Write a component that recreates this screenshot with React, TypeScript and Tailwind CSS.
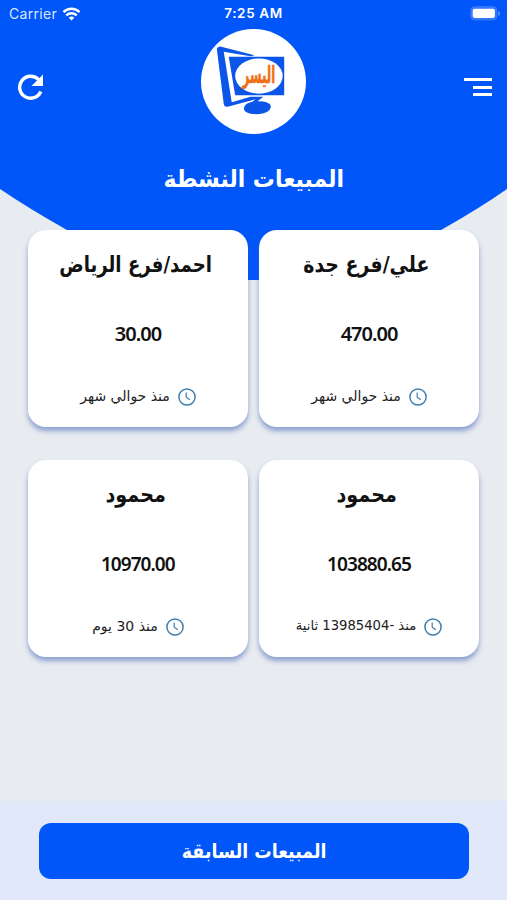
interface Sale {
  id: number;
  name: string;
  total: string;
  time: string;
  nameClass: string;
  totalClass: string;
  timeClass: string;
}

const sales: Sale[] = [
  {
    id: 1,
    name: 'علي/فرع جدة',
    total: '470.00',
    time: 'منذ حوالي شهر',
    nameClass: 'scale-x-[0.86] ml-[-6px]',
    totalClass: '',
    timeClass: 'text-[14px]',
  },
  {
    id: 2,
    name: 'احمد/فرع الرياض',
    total: '30.00',
    time: 'منذ حوالي شهر',
    nameClass: 'scale-x-[0.825] ml-[-4px]',
    totalClass: '',
    timeClass: 'text-[14px]',
  },
  {
    id: 3,
    name: 'محمود',
    total: '103880.65',
    time: 'منذ -13985404 ثانية',
    nameClass: 'scale-x-[0.87] ml-[-5px]',
    totalClass: 'scale-x-[0.955]',
    timeClass: 'text-[13.2px]',
  },
  {
    id: 4,
    name: 'محمود',
    total: '10970.00',
    time: 'منذ 30 يوم',
    nameClass: 'scale-x-[0.87] ml-[-5px]',
    totalClass: 'scale-x-[0.95]',
    timeClass: 'text-[14px]',
  },
];

const WifiIcon = () => (
  <svg width="19" height="14" viewBox="0 0 18 14" fill="none" stroke="#fff" strokeWidth="2.5">
    <path d="M1 5.2C5.6 .7 12.4.7 17 5.2" />
    <path d="M3.8 8.3c3-2.8 7.4-2.8 10.4 0" />
    <path d="M6.2 10.8C8 9.2 10 9.2 11.8 10.8L9 13.6z" fill="#fff" stroke="none" />
  </svg>
);

const BatteryIcon = () => (
  <svg width="31" height="15" viewBox="0 0 31 15">
    <rect x=".8" y=".8" width="26" height="13" rx="3.6" fill="#2f74fc" stroke="#3f80fd" />
    <rect x="2.7" y="2.7" width="22.2" height="9.2" rx="1.8" fill="#fff" />
    <path d="M28.4 5v5c2-.8 2-4.2 0-5z" fill="#6f9ffd" />
  </svg>
);

const RefreshIcon = () => (
  <svg width="28" height="28" viewBox="0 0 28 28">
    <path d="M23.8 18.5A11 11 0 1 1 21.7 6.7" fill="none" stroke="#fff" strokeWidth="3.4" />
    <path d="M26 1.5V13H14.5z" fill="#fff" />
  </svg>
);

const Logo = () => (
  <div className="mt-px size-[105px] rounded-full bg-white">
    <svg width="105" height="105" viewBox="0 0 106 106">
      <path
        d="M16 20.5Q16.5 17.5 20.5 17.8L54 26.5L50 27.5L23 23L31 74L50 68.5L63 68.3L57 73Q71 73 70.5 79Q69 85.5 57 86Q43 86 43.3 80Q44 75 52 73.500L55 71L27 78.500Q23.500 79 23 76z"
        fill="#0b55e8"
      />
      <path d="M28 28H84V67H34.500z" fill="#0b55e8" />
      <ellipse cx="58.500" cy="47.500" rx="24" ry="17.800" fill="#fff" />
      <text
        transform="translate(58.5 54.500) scale(1 1.35)"
        textAnchor="middle"
        textLength="33"
        lengthAdjust="spacingAndGlyphs"
        fontFamily="DejaVu Sans, sans-serif"
        fontWeight="bold"
        fontSize="18"
        fill="#f06f14"
        stroke="#f06f14"
        strokeWidth=".4"
      >
        اليسر
      </text>
    </svg>
  </div>
);

const ClockIcon = () => (
  <svg width="18" height="18" viewBox="0 0 18 18" fill="none" stroke="#3f7fae" strokeWidth="1.5">
    <circle cx="9" cy="9" r="8.1" />
    <path d="M8.2 4.5V9.3L11.8 11.8" strokeWidth="1.2" />
  </svg>
);

const SaleCard = ({ sale }: { sale: Sale }) => (
  <div className="flex h-[197px] flex-col items-center rounded-[18px] bg-white shadow-[0_4px_5px_rgba(50,90,180,0.5)]">
    <div className="mt-[18px] flex h-8 items-center text-[22px] font-bold whitespace-nowrap text-[#111]">
      <span className={sale.nameClass}>{sale.name}</span>
    </div>
    <div className="mt-[38px] flex h-8 items-center font-['Noto_Sans','DejaVu_Sans',sans-serif] text-[20px] font-semibold tracking-[-1px] text-[#111]">
      <span className={sale.totalClass}>{sale.total}</span>
    </div>
    <div className="mt-[35px] flex h-6 items-center gap-2 whitespace-nowrap text-[#222]">
      <ClockIcon />
      <span className={`pb-0.5 ${sale.timeClass}`}>{sale.time}</span>
    </div>
  </div>
);

export default function App() {
  return (
    <div
      dir="rtl"
      className="relative flex h-[900px] w-[507px] flex-col overflow-hidden bg-[#e8ebf0] font-['DejaVu_Sans',sans-serif]"
    >
      {/* curved blue backdrop behind the header and the first row */}
      <svg className="absolute top-0 left-0" width="507" height="280" viewBox="0 0 507 280">
        <path d="M0 0H507V189Q480 208 441 230Q390 258 340 280H167Q117 258 67 230Q28 208 0 189z" fill="#0056f9" />
      </svg>

      <div
        dir="ltr"
        className="relative grid h-[27px] grid-cols-3 items-center pr-[6px] pl-[9px] font-['Inter',sans-serif] text-[14px] text-white"
      >
        <div className="flex items-center gap-[5px] tracking-[0.3px]">
          <span className="text-[#d9e6ff]">Carrier</span>
          <WifiIcon />
        </div>
        <span className="-ml-[3px] text-center text-[13.5px] font-semibold tracking-[0.6px]">7:25 AM</span>
        <div className="flex justify-end">
          <BatteryIcon />
        </div>
      </div>

      <header className="relative mt-px flex h-[106px] items-start justify-between pr-[15px] pl-[17px]">
        <button className="mt-[48px] flex w-[30px] flex-col items-start gap-[4.5px] pt-[2px]">
          <span className="h-[3px] w-[28px] bg-white" />
          <span className="h-[3px] w-[19px] bg-white" />
          <span className="h-[3px] w-[19px] bg-white" />
        </button>
        <Logo />
        <button className="mt-[45px]">
          <RefreshIcon />
        </button>
      </header>

      <h1 className="relative mt-[25px] flex h-10 items-center justify-center text-[24px] font-bold text-white">
        <span className="scale-x-[0.915]">المبيعات النشطة</span>
      </h1>

      <main className="relative mt-[31px] grid grid-cols-[220px_220px] justify-center gap-x-[11px] gap-y-[33px]">
        {sales.map((sale) => (
          <SaleCard key={sale.id} sale={sale} />
        ))}
      </main>

      <footer className="relative mt-auto flex h-[99px] justify-center bg-[#e0e8fa] pt-[22px]">
        <button className="flex h-[56px] w-[430px] items-center justify-center rounded-[12px] bg-[#0056f9] text-[20px] font-bold text-white">
          <span className="-mr-[2px] scale-x-[0.87]">المبيعات السابقة</span>
        </button>
      </footer>
    </div>
  );
}
